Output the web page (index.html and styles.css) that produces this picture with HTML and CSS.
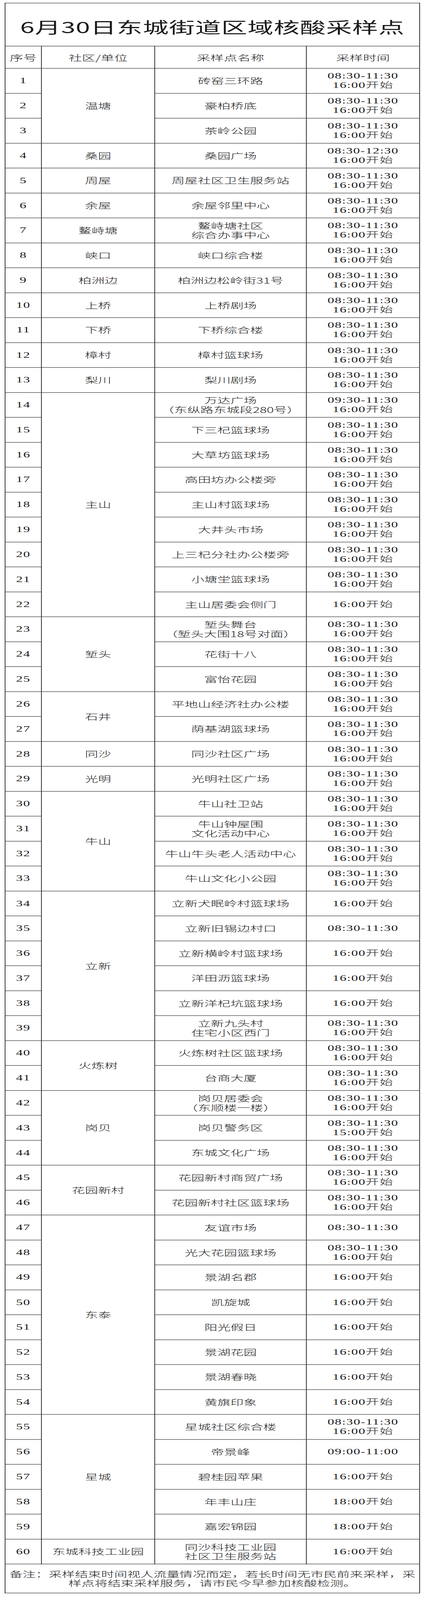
FILE: index.html
```html
<!DOCTYPE html>
<html lang="zh-CN">
<head>
<meta charset="utf-8">
<title>6月30日东城街道区域核酸采样点</title>
<link rel="stylesheet" href="styles.css">
</head>
<body>
<main class="page">
<table class="sheet">
  <colgroup>
    <col class="c-num"><col class="c-comm"><col class="c-name"><col class="c-time">
  </colgroup>
  <thead>
    <tr class="title-row"><td class="title" colspan="4">6月30日东城街道区域核酸采样点</td></tr>
    <tr class="head-row">
      <th>序号</th><th>社区/单位</th><th>采样点名称</th><th>采样时间</th>
    </tr>
  </thead>
  <tbody>
    <tr class="row"><td class="num">1</td><td class="comm" rowspan="3">温塘</td><td class="name">砖窑三环路</td><td class="time"><span class="ln">08:30-11:30</span><span class="ln">16:00开始</span></td></tr>
    <tr class="row"><td class="num">2</td><td class="name">豪柏桥底</td><td class="time"><span class="ln">08:30-11:30</span><span class="ln">16:00开始</span></td></tr>
    <tr class="row"><td class="num">3</td><td class="name">茶岭公园</td><td class="time"><span class="ln">08:30-11:30</span><span class="ln">16:00开始</span></td></tr>
    <tr class="row"><td class="num">4</td><td class="comm">桑园</td><td class="name">桑园广场</td><td class="time"><span class="ln">08:30-12:30</span><span class="ln">16:00开始</span></td></tr>
    <tr class="row"><td class="num">5</td><td class="comm">周屋</td><td class="name">周屋社区卫生服务站</td><td class="time"><span class="ln">08:30-11:30</span><span class="ln">16:00开始</span></td></tr>
    <tr class="row"><td class="num">6</td><td class="comm">余屋</td><td class="name">余屋邻里中心</td><td class="time"><span class="ln">08:30-11:30</span><span class="ln">16:00开始</span></td></tr>
    <tr class="row"><td class="num">7</td><td class="comm">鳌峙塘</td><td class="name"><span class="ln">鳌峙塘社区</span><span class="ln">综合办事中心</span></td><td class="time"><span class="ln">08:30-11:30</span><span class="ln">16:00开始</span></td></tr>
    <tr class="row"><td class="num">8</td><td class="comm">峡口</td><td class="name">峡口综合楼</td><td class="time"><span class="ln">08:30-11:30</span><span class="ln">16:00开始</span></td></tr>
    <tr class="row"><td class="num">9</td><td class="comm">柏洲边</td><td class="name">柏洲边松岭街31号</td><td class="time"><span class="ln">08:30-11:30</span><span class="ln">16:00开始</span></td></tr>
    <tr class="row"><td class="num">10</td><td class="comm">上桥</td><td class="name">上桥剧场</td><td class="time"><span class="ln">08:30-11:30</span><span class="ln">16:00开始</span></td></tr>
    <tr class="row"><td class="num">11</td><td class="comm">下桥</td><td class="name">下桥综合楼</td><td class="time"><span class="ln">08:30-11:30</span><span class="ln">16:00开始</span></td></tr>
    <tr class="row"><td class="num">12</td><td class="comm">樟村</td><td class="name">樟村篮球场</td><td class="time"><span class="ln">08:30-11:30</span><span class="ln">16:00开始</span></td></tr>
    <tr class="row"><td class="num">13</td><td class="comm">梨川</td><td class="name">梨川剧场</td><td class="time"><span class="ln">08:30-11:30</span><span class="ln">16:00开始</span></td></tr>
    <tr class="row"><td class="num">14</td><td class="comm" rowspan="9">主山</td><td class="name"><span class="ln">万达广场</span><span class="ln">（东纵路东城段280号）</span></td><td class="time"><span class="ln">09:30-11:30</span><span class="ln">16:00开始</span></td></tr>
    <tr class="row"><td class="num">15</td><td class="name">下三杞篮球场</td><td class="time"><span class="ln">08:30-11:30</span><span class="ln">16:00开始</span></td></tr>
    <tr class="row"><td class="num">16</td><td class="name">大草坊篮球场</td><td class="time"><span class="ln">08:30-11:30</span><span class="ln">16:00开始</span></td></tr>
    <tr class="row"><td class="num">17</td><td class="name">高田坊办公楼旁</td><td class="time"><span class="ln">08:30-11:30</span><span class="ln">16:00开始</span></td></tr>
    <tr class="row"><td class="num">18</td><td class="name">主山村篮球场</td><td class="time"><span class="ln">08:30-11:30</span><span class="ln">16:00开始</span></td></tr>
    <tr class="row"><td class="num">19</td><td class="name">大井头市场</td><td class="time"><span class="ln">08:30-11:30</span><span class="ln">16:00开始</span></td></tr>
    <tr class="row"><td class="num">20</td><td class="name">上三杞分社办公楼旁</td><td class="time"><span class="ln">08:30-11:30</span><span class="ln">16:00开始</span></td></tr>
    <tr class="row"><td class="num">21</td><td class="name">小塘坣篮球场</td><td class="time"><span class="ln">08:30-11:30</span><span class="ln">16:00开始</span></td></tr>
    <tr class="row"><td class="num">22</td><td class="name">主山居委会侧门</td><td class="time">16:00开始</td></tr>
    <tr class="row"><td class="num">23</td><td class="comm" rowspan="3">堑头</td><td class="name"><span class="ln">堑头舞台</span><span class="ln">（堑头大围18号对面）</span></td><td class="time"><span class="ln">08:30-11:30</span><span class="ln">16:00开始</span></td></tr>
    <tr class="row"><td class="num">24</td><td class="name">花街十八</td><td class="time"><span class="ln">08:30-11:30</span><span class="ln">16:00开始</span></td></tr>
    <tr class="row"><td class="num">25</td><td class="name">富怡花园</td><td class="time"><span class="ln">08:30-11:30</span><span class="ln">16:00开始</span></td></tr>
    <tr class="row"><td class="num">26</td><td class="comm" rowspan="2">石井</td><td class="name">平地山经济社办公楼</td><td class="time"><span class="ln">08:30-11:30</span><span class="ln">16:00开始</span></td></tr>
    <tr class="row"><td class="num">27</td><td class="name">荫基湖篮球场</td><td class="time"><span class="ln">08:30-11:30</span><span class="ln">16:00开始</span></td></tr>
    <tr class="row"><td class="num">28</td><td class="comm">同沙</td><td class="name">同沙社区广场</td><td class="time"><span class="ln">08:30-11:30</span><span class="ln">16:00开始</span></td></tr>
    <tr class="row"><td class="num">29</td><td class="comm">光明</td><td class="name">光明社区广场</td><td class="time"><span class="ln">08:30-11:30</span><span class="ln">16:00开始</span></td></tr>
    <tr class="row"><td class="num">30</td><td class="comm" rowspan="4">牛山</td><td class="name">牛山社卫站</td><td class="time"><span class="ln">08:30-11:30</span><span class="ln">16:00开始</span></td></tr>
    <tr class="row"><td class="num">31</td><td class="name"><span class="ln">牛山钟屋围</span><span class="ln">文化活动中心</span></td><td class="time"><span class="ln">08:30-11:30</span><span class="ln">16:00开始</span></td></tr>
    <tr class="row"><td class="num">32</td><td class="name">牛山牛头老人活动中心</td><td class="time"><span class="ln">08:30-11:30</span><span class="ln">16:00开始</span></td></tr>
    <tr class="row"><td class="num">33</td><td class="name">牛山文化小公园</td><td class="time"><span class="ln">08:30-11:30</span><span class="ln">16:00开始</span></td></tr>
    <tr class="row"><td class="num">34</td><td class="comm" rowspan="6">立新</td><td class="name">立新犬眠岭村篮球场</td><td class="time">16:00开始</td></tr>
    <tr class="row"><td class="num">35</td><td class="name">立新旧锡边村口</td><td class="time">08:30-11:30</td></tr>
    <tr class="row"><td class="num">36</td><td class="name">立新横岭村篮球场</td><td class="time">16:00开始</td></tr>
    <tr class="row"><td class="num">37</td><td class="name">洋田沥篮球场</td><td class="time">16:00开始</td></tr>
    <tr class="row"><td class="num">38</td><td class="name">立新洋杞坑篮球场</td><td class="time">16:00开始</td></tr>
    <tr class="row"><td class="num">39</td><td class="name"><span class="ln">立新九头村</span><span class="ln">住宅小区西门</span></td><td class="time"><span class="ln">08:30-11:30</span><span class="ln">16:00开始</span></td></tr>
    <tr class="row"><td class="num">40</td><td class="comm" rowspan="2">火炼树</td><td class="name">火炼树社区篮球场</td><td class="time"><span class="ln">08:30-11:30</span><span class="ln">16:00开始</span></td></tr>
    <tr class="row"><td class="num">41</td><td class="name">台商大厦</td><td class="time"><span class="ln">08:30-11:30</span><span class="ln">16:00开始</span></td></tr>
    <tr class="row"><td class="num">42</td><td class="comm" rowspan="3">岗贝</td><td class="name"><span class="ln">岗贝居委会</span><span class="ln">（东顺楼一楼）</span></td><td class="time"><span class="ln">08:30-11:30</span><span class="ln">16:00开始</span></td></tr>
    <tr class="row"><td class="num">43</td><td class="name">岗贝警务区</td><td class="time"><span class="ln">08:30-11:30</span><span class="ln">15:00开始</span></td></tr>
    <tr class="row"><td class="num">44</td><td class="name">东城文化广场</td><td class="time"><span class="ln">08:30-11:30</span><span class="ln">16:00开始</span></td></tr>
    <tr class="row"><td class="num">45</td><td class="comm" rowspan="2">花园新村</td><td class="name">花园新村商贸广场</td><td class="time"><span class="ln">08:30-11:30</span><span class="ln">16:00开始</span></td></tr>
    <tr class="row"><td class="num">46</td><td class="name">花园新村社区篮球场</td><td class="time"><span class="ln">08:30-11:30</span><span class="ln">16:00开始</span></td></tr>
    <tr class="row"><td class="num">47</td><td class="comm" rowspan="8">东泰</td><td class="name">友谊市场</td><td class="time">08:30-11:30</td></tr>
    <tr class="row"><td class="num">48</td><td class="name">光大花园篮球场</td><td class="time"><span class="ln">08:30-11:30</span><span class="ln">16:00开始</span></td></tr>
    <tr class="row"><td class="num">49</td><td class="name">景湖名郡</td><td class="time">16:00开始</td></tr>
    <tr class="row"><td class="num">50</td><td class="name">凯旋城</td><td class="time">16:00开始</td></tr>
    <tr class="row"><td class="num">51</td><td class="name">阳光假日</td><td class="time">16:00开始</td></tr>
    <tr class="row"><td class="num">52</td><td class="name">景湖花园</td><td class="time">16:00开始</td></tr>
    <tr class="row"><td class="num">53</td><td class="name">景湖春晓</td><td class="time">16:00开始</td></tr>
    <tr class="row"><td class="num">54</td><td class="name">黄旗印象</td><td class="time">16:00开始</td></tr>
    <tr class="row"><td class="num">55</td><td class="comm" rowspan="5">星城</td><td class="name">星城社区综合楼</td><td class="time"><span class="ln">08:30-11:30</span><span class="ln">16:00开始</span></td></tr>
    <tr class="row"><td class="num">56</td><td class="name">帝景峰</td><td class="time">09:00-11:00</td></tr>
    <tr class="row"><td class="num">57</td><td class="name">碧桂园苹果</td><td class="time">16:00开始</td></tr>
    <tr class="row"><td class="num">58</td><td class="name">年丰山庄</td><td class="time">18:00开始</td></tr>
    <tr class="row"><td class="num">59</td><td class="name">嘉宏锦园</td><td class="time">18:00开始</td></tr>
    <tr class="row"><td class="num">60</td><td class="comm">东城科技工业园</td><td class="name"><span class="ln">同沙科技工业园</span><span class="ln">社区卫生服务站</span></td><td class="time">16:00开始</td></tr>
  </tbody>
  <tfoot>
    <tr class="note-row"><td class="note" colspan="4"><span class="ln ln-note">备注：采样结束时间视人流量情况而定，若长时间无市民前来采样，采</span><span class="ln ln-note">样点将结束采样服务，请市民今早参加核酸检测。</span></td></tr>
  </tfoot>
</table>
</main>
</body>
</html>
```

FILE: styles.css
```css
html, body {
  margin: 0;
  padding: 0;
  background: #ffffff;
}

/* Full-size sheet: 1080 x 6834 */
.page {
  width: 1080px;
  min-height: 6834px;
  padding: 12px 0 0 12px;
  box-sizing: border-box;
  transform-origin: 0 0;
}

@media (max-height: 6833px) {
  html, body {
    height: 100%;
    overflow: hidden;
  }
  .page {
    min-height: 0;
    height: 6834px;
    transform: scaleY(0.5992);
  }
}

.sheet {
  border-collapse: collapse;
  table-layout: fixed;
  width: 1061px;
  color: #1a1a1a;
  font-family: "Noto Sans CJK SC", "Noto Sans", sans-serif;
}

.c-num { width: 93px; }
.c-comm { width: 290px; }
.c-name { width: 388px; }
.c-time { width: 290px; }

.sheet td,
.sheet th {
  border: 2px solid #333333;
  padding: 0;
  text-align: center;
  vertical-align: middle;
  font-size: 33.5px;
  line-height: 40px;
  font-weight: 300;
  white-space: nowrap;
  overflow: hidden;
}

.ln {
  display: block;
  height: 40px;
}

.ln-note {
  height: 38px;
}

.title-row { height: 184px; }

.sheet .title {
  font-size: 66px;
  line-height: 80px;
  font-weight: 400;
  padding-top: 16px;
  letter-spacing: 1px;
}

.head-row { height: 95px; }

.sheet th {
  font-size: 34.5px;
}

.row { height: 106.5px; }

.sheet .num,
.sheet .time {
  font-family: "Liberation Serif", "Noto Sans CJK SC", serif;
  font-size: 34px;
  letter-spacing: 1.5px;
}

.sheet .num {
  font-weight: 400;
}

.note-row { height: 124px; }

.sheet .note {
  font-size: 33.5px;
  line-height: 38px;
  padding: 0 4px;
}
```
